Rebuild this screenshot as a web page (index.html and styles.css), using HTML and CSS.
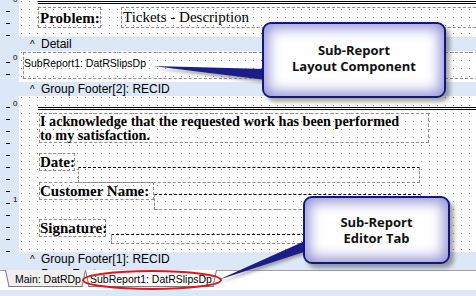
FILE: index.html
```html
<!DOCTYPE html>
<html>
<head>
<meta charset="utf-8">
<link rel="stylesheet" href="styles.css">
</head>
<body>
<div class="app">
  <div class="designer">
    <div class="section sec-header">
      <div class="ruler"><span class="rnum n0">0</span></div>
      <div class="canvas">
        <div class="dbl-line l-top"></div>
        <div class="comp c-problem"><span class="lbl-b">Problem:</span></div>
        <div class="comp c-tickets"><span class="lbl-r">Tickets - Description</span></div>
      </div>
    </div>
    <div class="band"><span class="caret">^</span>Detail</div>
    <div class="section sec-detail">
      <div class="ruler"><span class="rnum n0d">0</span></div>
      <div class="canvas">
        <div class="comp c-sub">SubReport1: DatRSlipsDp</div>
      </div>
    </div>
    <div class="band"><span class="caret">^</span>Group Footer[2]: RECID</div>
    <div class="section sec-gf2">
      <div class="ruler"><span class="rnum n0g">0</span><span class="rnum n1g">1</span></div>
      <div class="canvas">
        <div class="dbl-line l-gf2"></div>
        <div class="comp c-ack">I acknowledge that the requested work has been performed<br>to my satisfaction.</div>
        <div class="comp c-date"><span class="lbl-b">Date:</span></div>
        <div class="field f-date"></div>
        <div class="comp c-cust"><span class="lbl-b">Customer Name:</span></div>
        <div class="field f-cust"></div>
        <div class="comp c-sig"><span class="lbl-b">Signature:</span></div>
        <div class="field f-sig"></div>
      </div>
    </div>
    <div class="band"><span class="caret">^</span>Group Footer[1]: RECID</div>
    <div class="band band-last"><span class="caret">^</span>Page Footer</div>
  </div>
  <div class="tabbar">
    <div class="tabs">
      <div class="tab">Main: DatRDp</div>
      <div class="tab active">SubReport1: DatRSlipsDp</div>
    </div>
    <div class="status"></div>
  </div>

  <svg class="overlay" width="476" height="296" viewBox="0 0 476 296">
    <defs>
      <filter id="blur" x="-20%" y="-50%" width="140%" height="200%">
        <feGaussianBlur stdDeviation="1.5"/>
      </filter>
    </defs>
    <ellipse cx="152" cy="280" rx="69" ry="9" fill="none" stroke="#e3141c" stroke-width="2"/>
    <polygon points="155,69 266,72 266,83" fill="#777" opacity="0.6" filter="url(#blur)"/>
    <polygon points="153,66 266,69 266,80" fill="#1d1d88"/>
    <polygon points="220,283 307,243 307,254" fill="#777" opacity="0.6" filter="url(#blur)"/>
    <polygon points="218,280 307,240 307,251" fill="#1d1d88"/>
  </svg>

  <div class="callout co-layout">Sub-Report<br>Layout Component</div>
  <div class="callout co-editor">Sub-Report<br>Editor Tab</div>
</div>
</body>
</html>
```

FILE: styles.css
```css
html, body {
  margin: 0;
  padding: 0;
  background: #fff;
}

.app {
  position: relative;
  width: 476px;
  height: 296px;
  overflow: hidden;
  font-family: "Liberation Sans", Arial, sans-serif;
}

.designer {
  height: 270px;
  overflow: hidden;
  display: flex;
  flex-direction: column;
}

.section {
  display: flex;
  flex: none;
}

.sec-header { height: 37px; }
.sec-detail { height: 31px; }
.sec-gf2 { height: 156px; }

.ruler {
  position: relative;
  width: 19px;
  flex: none;
  background-color: #dce7f7;
  background-image: repeating-linear-gradient(to bottom, transparent 0, transparent 11px, #000 11px, #000 12px);
  background-size: 4px 100%;
  background-position: 6px 0;
  background-repeat: no-repeat;
}

.rnum {
  position: absolute;
  left: 13px;
  font-size: 8px;
  line-height: 8px;
  color: #000;
}
.n0 { top: -4px; }
.n0d { top: 3px; }
.n0g { top: 4px; }
.n1g { top: 100px; }

.canvas {
  position: relative;
  flex: 1;
  background-color: #fff;
  background-image:
    linear-gradient(to right, #fff 7px, transparent 7px),
    linear-gradient(to bottom, #fff 7px, #8a8a8a 7px);
  background-size: 8px 8px;
  background-position: 3px 2px;
}

.band {
  flex: none;
  height: 14px;
  background: #dce7f7;
  font-size: 12px;
  line-height: 14px;
  color: #000;
  padding-left: 41px;
  position: relative;
}
.band-last {
  line-height: 16px;
}
.caret {
  position: absolute;
  left: 30px;
  top: 1px;
  font-size: 10px;
}

.dbl-line {
  position: absolute;
  right: 0;
  height: 0;
  border-top: 3px double #000;
}
.l-top { left: 19px; top: 1px; }
.l-gf2 { left: 19px; top: 11px; }

.comp {
  position: absolute;
  box-sizing: border-box;
  border: 1px dashed #8c8c8c;
}

.lbl-b {
  font-family: "Liberation Serif", "Times New Roman", serif;
  font-weight: bold;
  font-size: 15px;
  color: #000;
}
.lbl-r {
  font-family: "Liberation Serif", "Times New Roman", serif;
  font-size: 15px;
  color: #000;
}

.c-problem { left: 19px; top: 7px; width: 63px; height: 21px; line-height: 19px; padding-left: 1px; }
.c-tickets { left: 102px; top: 7px; width: 380px; height: 21px; line-height: 17px; padding-left: 1px; }

.c-sub {
  left: 4px; top: 1px; width: 460px; height: 27px;
  font-size: 10.5px; line-height: 20px; color: #000;
  border-right: none;
}

.c-ack {
  left: 20px; top: 17px; width: 390px; height: 30px;
  font-family: "Liberation Serif", "Times New Roman", serif;
  font-weight: bold; font-size: 14.2px; line-height: 14px;
  white-space: nowrap;
  color: #000;
}

.c-date { left: 20px; top: 57px; width: 36px; height: 18px; line-height: 16px; }
.c-cust { left: 20px; top: 86px; width: 115px; height: 18px; line-height: 16px; }
.c-sig { left: 20px; top: 123px; width: 67px; height: 18px; line-height: 16px; }

.field {
  position: absolute;
  box-sizing: border-box;
  border: 1px dashed #8c8c8c;
  border-top: 1px dashed #000;
}
.f-date { left: 59px; top: 71px; width: 342px; height: 16px; }
.f-cust { left: 135px; top: 98px; width: 267px; height: 16px; }
.f-sig { left: 92px; top: 138px; width: 320px; height: 10px; }

.tabbar {
  height: 26px;
  border-top: 1px solid #a0a0a0;
  box-sizing: border-box;
  display: flex;
  flex-direction: column;
  background: #fff;
}
.tabs {
  height: 19px;
  display: flex;
  padding-left: 5px;
  align-items: flex-start;
}
.tab {
  position: relative;
  z-index: 0;
  font-size: 10.5px;
  line-height: 16px;
  height: 16px;
  padding: 0 5px 0 10px;
  color: #000;
}
.tab::before,
.tab::after {
  content: "";
  position: absolute;
  top: -1px;
  bottom: 0;
  z-index: -1;
  background: #efefef;
  border-bottom: 1px solid #7a7a7a;
  transform-origin: top;
}
.tab::before {
  left: 0;
  right: 40%;
  border-left: 1px solid #7a7a7a;
  transform: skewX(12deg);
}
.tab::after {
  left: 40%;
  right: 0;
  border-right: 1px solid #7a7a7a;
  transform: skewX(-12deg);
}
.tab.active {
  padding-left: 5px;
  margin-left: -1px;
}
.tab.active::before,
.tab.active::after {
  background: #fff;
}
.status {
  flex: 1;
  background: #dce7f7;
}

.overlay {
  position: absolute;
  left: 0;
  top: 0;
  pointer-events: none;
}

.callout {
  position: absolute;
  box-sizing: border-box;
  border: 2px solid #15157e;
  border-radius: 9px;
  background: #fff;
  box-shadow: inset 0 0 14px 4px #8f8fd6, 4px 4px 4px rgba(0, 0, 0, 0.35);
  display: flex;
  align-items: center;
  justify-content: center;
  text-align: center;
  font-family: "Open Sans", "DejaVu Sans", sans-serif;
  font-weight: 700;
  font-size: 13px;
  line-height: 16px;
  color: #111;
}
.co-layout { left: 262px; top: 22px; width: 184px; height: 76px; padding-bottom: 4px; }
.co-editor { left: 303px; top: 196px; width: 147px; height: 68px; }
```
